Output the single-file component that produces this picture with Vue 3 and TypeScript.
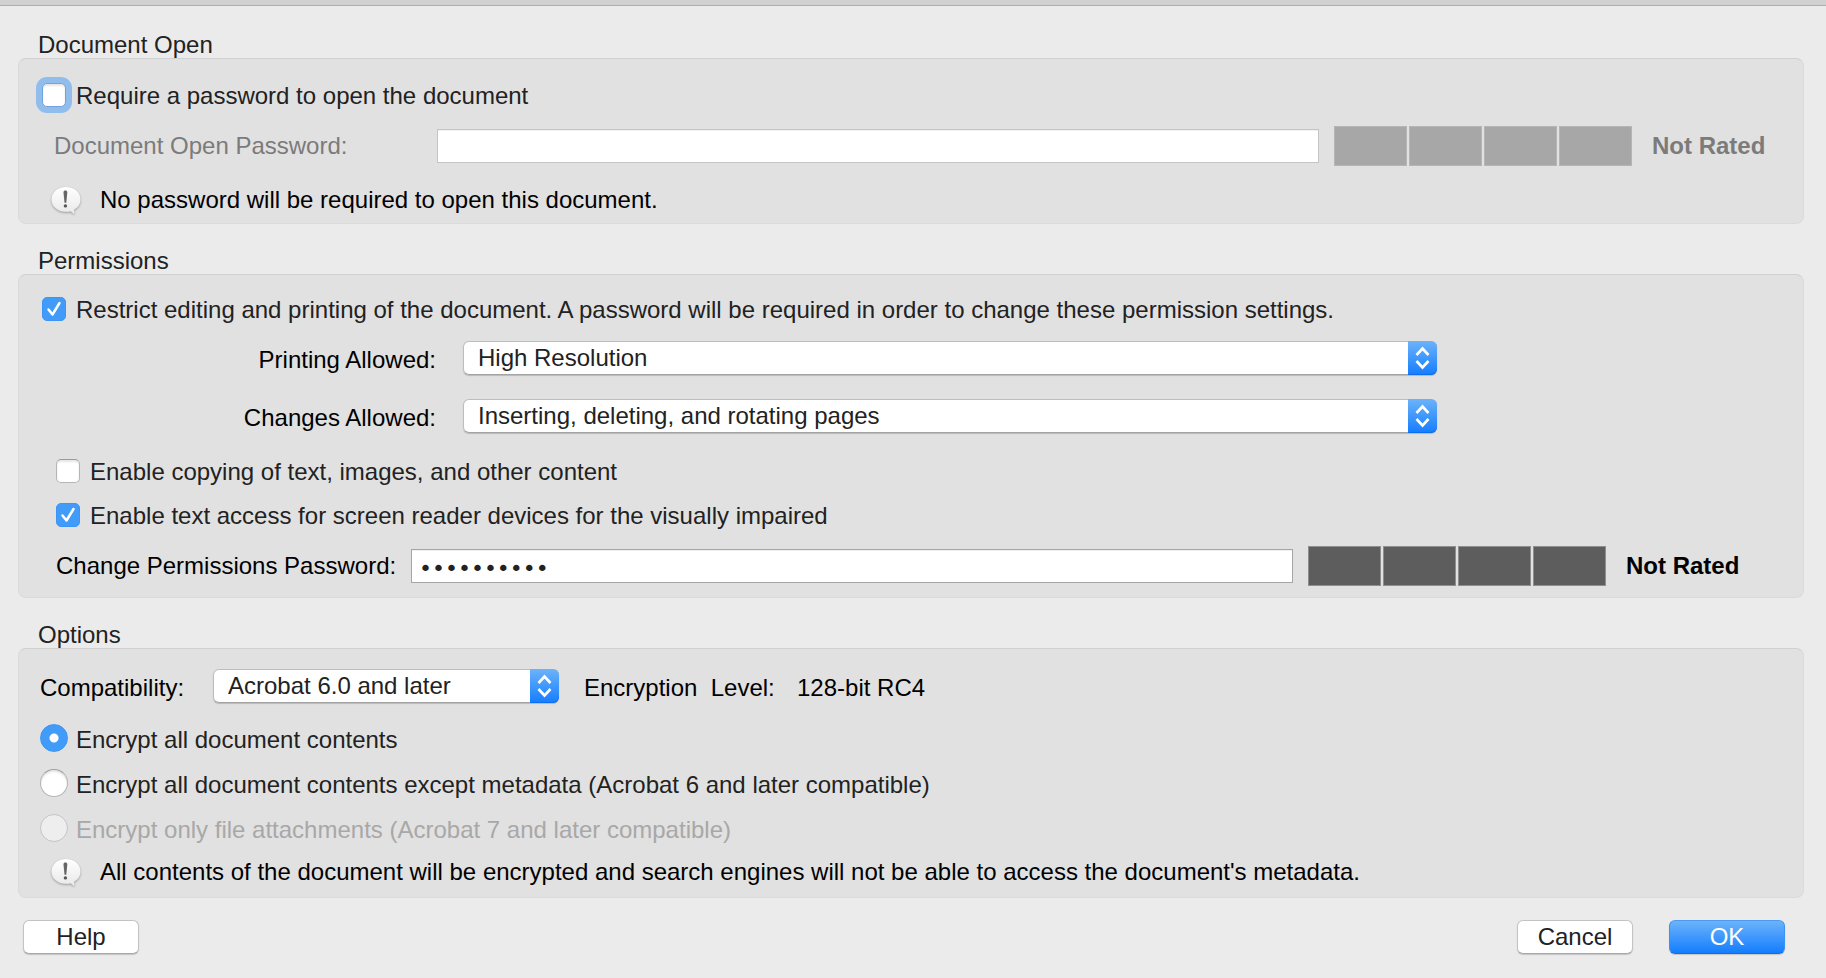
<script setup lang="ts">
import { ref } from 'vue'

const requireOpen = ref(false)
const openPassword = ref('')
const restrict = ref(true)
const printing = ref('High Resolution')
const changes = ref('Inserting, deleting, and rotating pages')
const copying = ref(false)
const screenReader = ref(true)
const permPassword = ref('permission')
const compatibility = ref('Acrobat 6.0 and later')
const encryption = ref('all')

const printingOptions = ['None', 'Low Resolution (150 dpi)', 'High Resolution']
const changesOptions = ['None', 'Inserting, deleting, and rotating pages', 'Any except extracting pages']
const compatibilityOptions = ['Acrobat 5.0 and later', 'Acrobat 6.0 and later', 'Acrobat 7.0 and later']

const encryptionOptions = [
  { id: 'all', label: 'Encrypt all document contents', disabled: false },
  { id: 'except', label: 'Encrypt all document contents except metadata (Acrobat 6 and later compatible)', disabled: false },
  { id: 'files', label: 'Encrypt only file attachments (Acrobat 7 and later compatible)', disabled: true },
]
</script>

<template>
  <form class="dialog" @submit.prevent>
    <section>
      <h2>Document Open</h2>
      <div class="panel panel-open">
        <label class="choice">
          <span class="box">
            <input v-model="requireOpen" type="checkbox" class="ringed" />
            <svg v-if="requireOpen" viewBox="0 0 24 24"><path d="M6.500 12.500l4 5L17.500 6" /></svg>
          </span>
          <span>Require a password to open the document</span>
        </label>
        <div class="password-row password-open">
          <label for="open-password" class="dim">Document Open Password:</label>
          <input id="open-password" v-model="openPassword" type="password" class="field" disabled />
          <span class="meter faded" role="img" aria-label="Password strength"><i v-for="n in 4" :key="n"></i></span>
          <strong class="dim">Not Rated</strong>
        </div>
        <p class="note">
          <svg class="bubble" viewBox="0 0 32 28" aria-hidden="true">
            <defs>
              <linearGradient id="bubble-fill" x1="0" y1="0" x2="0" y2="1">
                <stop offset="0" stop-color="#ffffff" />
                <stop offset="1" stop-color="#e9e9e9" />
              </linearGradient>
            </defs>
            <path class="bubble-shape" fill="url(#bubble-fill)" d="M16 0C7.800 0 1.500 5.400 1.500 12.500S7.500 24.300 15 24.800c2 .1 4.400-.1 5.800-.6.9 1.200 2 2.100 3.400 2.800l-.1-4.400c3.900-2 6.400-5.800 6.400-10.100C30.500 5.400 24.200 0 16 0z" />
            <path fill="#666" d="M13.500 5.600c0-1.400.8-2 1.900-2s1.900.6 1.900 2l-1 10.200h-1.800z" />
            <circle cx="15.400" cy="18.900" r="1.700" fill="#555" />
          </svg>
          <span>No password will be required to open this document.</span>
        </p>
      </div>
    </section>

    <section>
      <h2>Permissions</h2>
      <div class="panel panel-permissions">
        <label class="choice">
          <span class="box">
            <input v-model="restrict" type="checkbox" />
            <svg v-if="restrict" viewBox="0 0 24 24"><path d="M6.500 12.500l4 5L17.500 6" /></svg>
          </span>
          <span>Restrict editing and printing of the document. A password will be required in order to change these permission settings.</span>
        </label>
        <div class="selects">
          <label for="printing">Printing Allowed:</label>
          <span class="popup">
            <select id="printing" v-model="printing">
              <option v-for="o in printingOptions" :key="o">{{ o }}</option>
            </select>
            <svg viewBox="0 0 29 34" aria-hidden="true"><path d="M8.500 14l6-6.500 6 6.500M8.500 20l6 6.500 6-6.500" /></svg>
          </span>
          <label for="changes">Changes Allowed:</label>
          <span class="popup">
            <select id="changes" v-model="changes">
              <option v-for="o in changesOptions" :key="o">{{ o }}</option>
            </select>
            <svg viewBox="0 0 29 34" aria-hidden="true"><path d="M8.500 14l6-6.500 6 6.500M8.500 20l6 6.500 6-6.500" /></svg>
          </span>
        </div>
        <div class="extras">
          <label class="choice">
            <span class="box">
              <input v-model="copying" type="checkbox" />
              <svg v-if="copying" viewBox="0 0 24 24"><path d="M6.500 12.500l4 5L17.500 6" /></svg>
            </span>
            <span>Enable copying of text, images, and other content</span>
          </label>
          <label class="choice">
            <span class="box">
              <input v-model="screenReader" type="checkbox" />
              <svg v-if="screenReader" viewBox="0 0 24 24"><path d="M6.500 12.500l4 5L17.500 6" /></svg>
            </span>
            <span>Enable text access for screen reader devices for the visually impaired</span>
          </label>
        </div>
        <div class="password-row password-permissions">
          <label for="perm-password">Change Permissions Password:</label>
          <input id="perm-password" v-model="permPassword" type="password" class="field" />
          <span class="meter" role="img" aria-label="Password strength"><i v-for="n in 4" :key="n"></i></span>
          <strong>Not Rated</strong>
        </div>
      </div>
    </section>

    <section>
      <h2>Options</h2>
      <div class="panel panel-options">
        <div class="compat">
          <label for="compatibility">Compatibility:</label>
          <span class="popup">
            <select id="compatibility" v-model="compatibility">
              <option v-for="o in compatibilityOptions" :key="o">{{ o }}</option>
            </select>
            <svg viewBox="0 0 29 34" aria-hidden="true"><path d="M8.500 14l6-6.500 6 6.500M8.500 20l6 6.500 6-6.500" /></svg>
          </span>
          <span class="level">Encryption&nbsp; Level:</span>
          <span class="cipher">128-bit RC4</span>
        </div>
        <div class="radios">
          <label v-for="o in encryptionOptions" :key="o.id" class="radio" :class="{ off: o.disabled }">
            <input v-model="encryption" type="radio" name="encryption" :value="o.id" :disabled="o.disabled" />
            <span>{{ o.label }}</span>
          </label>
        </div>
        <p class="note">
          <svg class="bubble" viewBox="0 0 32 28" aria-hidden="true">
            <path class="bubble-shape" fill="url(#bubble-fill)" d="M16 0C7.800 0 1.500 5.400 1.500 12.500S7.500 24.300 15 24.800c2 .1 4.400-.1 5.800-.6.9 1.200 2 2.100 3.400 2.800l-.1-4.400c3.900-2 6.400-5.800 6.400-10.100C30.500 5.400 24.200 0 16 0z" />
            <path fill="#666" d="M13.500 5.600c0-1.400.8-2 1.900-2s1.900.6 1.900 2l-1 10.200h-1.800z" />
            <circle cx="15.400" cy="18.900" r="1.700" fill="#555" />
          </svg>
          <span>All contents of the document will be encrypted and search engines will not be able to access the document's metadata.</span>
        </p>
      </div>
    </section>

    <footer>
      <button type="button">Help</button>
      <span class="spacer"></span>
      <button type="button">Cancel</button>
      <button type="submit" class="primary">OK</button>
    </footer>
  </form>
</template>

<style>
body {
  margin: 0;
  background: #ebebeb;
}
</style>

<style scoped>
.dialog {
  box-sizing: border-box;
  min-height: 100vh;
  padding: 0 22px 0 18px;
  border-top: 5px solid #d1d1d1;
  box-shadow: inset 0 1px #b1adb0;
  background: #ebebeb;
  color: #222;
  font: 24px/26px "Liberation Sans", Arial, sans-serif;
}
section {
  padding-top: 23px;
}
section:first-child {
  padding-top: 26px;
}
h2 {
  margin: 0 0 0 20px;
  font-size: 24px;
  line-height: 27px;
  font-weight: 400;
}
.panel {
  border: 1px solid #dadada;
  border-top-color: #d0d0d0;
  border-radius: 8px;
  background: #e1e1e1;
}
.panel-open {
  padding: 24px 38px 8px 23px;
}
.panel-permissions {
  padding: 22px 64px 10px 23px;
}
.panel-options {
  padding: 20px 23px 10px 21px;
}

.choice,
.radio {
  display: flex;
  align-items: flex-start;
  gap: 10px;
  width: fit-content;
}
.box,
.popup {
  display: grid;
}
.box {
  width: 24px;
  height: 24px;
  flex: none;
}
.box > * {
  grid-area: 1 / 1;
}
.box input,
.radio input {
  appearance: none;
  box-sizing: border-box;
  width: 24px;
  height: 24px;
  margin: 0;
  border: 1px solid #b5b5b5;
  border-top-color: #9c9c9c;
  border-radius: 5px;
  background: #fff;
  box-shadow: inset 0 2px 2px #e6e6e6;
}
.box input:checked,
.radio input:checked {
  border-color: #3b94f6;
  background: #419bf9;
  box-shadow: none;
}
.box input.ringed {
  border-color: #6fa3dc;
  box-shadow: 0 0 0 6px #91bdec, inset 0 2px 2px #e6e6e6;
}
.box svg {
  width: 24px;
  height: 24px;
  pointer-events: none;
}
.box path {
  fill: none;
  stroke: #fff;
  stroke-width: 2.5;
  stroke-linecap: round;
  stroke-linejoin: round;
}

.password-row {
  display: flex;
  align-items: center;
  height: 42px;
  color: #000;
}
.password-open {
  margin: 16px 0 20px 12px;
}
.password-open label {
  width: 383px;
}
.password-permissions {
  margin: 16px 0 0 14px;
}
.password-permissions label {
  width: 355px;
}
.password-row .dim {
  color: #7b7b7b;
}
.field {
  box-sizing: border-box;
  flex: 1;
  min-width: 0;
  height: 34px;
  padding: 4px 7px 0;
  border: 1px solid #a6a6a6;
  border-radius: 0;
  outline: 0;
  background: #fff;
  box-shadow: inset 0 1px #f0f0f0;
  color: #222;
  font: 22px/28px "DejaVu Sans", sans-serif;
}
.field:disabled {
  border-color: #c5c5c5;
}
.meter {
  display: flex;
  gap: 2px;
  width: 298px;
  height: 40px;
  margin: 0 20px 0 15px;
}
.meter i {
  box-sizing: border-box;
  flex: 1;
  border: 1px solid #8e8e8e;
  background: #5d5d5d;
}
.meter.faded i {
  border-color: #b5b5b5;
  background: #a7a7a7;
}
strong {
  width: 113px;
  white-space: nowrap;
}

.note {
  display: flex;
  align-items: flex-start;
  gap: 18px;
  margin: 0 0 0 8px;
  color: #000;
}
.panel-options .note {
  margin: 16px 0 0 10px;
}
.bubble {
  width: 32px;
  height: 28px;
  flex: none;
  overflow: visible;
}
.bubble-shape {
  filter: drop-shadow(0 1px 1px #999);
}

.selects {
  display: grid;
  grid-template-columns: 394px minmax(0, 974px);
  column-gap: 27px;
  row-gap: 24px;
  margin-top: 18px;
  color: #000;
}
.selects label {
  height: 28px;
  padding-top: 6px;
  text-align: right;
}
.popup {
  height: 34px;
  grid-template-columns: 1fr 29px;
  border-radius: 6px;
  box-shadow: 0 1px 1px #b8b8b8;
}
.popup select {
  appearance: none;
  grid-area: 1 / 1 / 2 / 3;
  box-sizing: border-box;
  width: 100%;
  height: 34px;
  margin: 0;
  padding: 0 40px 0 14px;
  border: 1px solid #bdbdbd;
  border-bottom-color: #a3a3a3;
  border-radius: 6px;
  background: #fff;
  color: #222;
  font: inherit;
}
.popup svg {
  grid-area: 1 / 2;
  width: 29px;
  height: 34px;
  z-index: 1;
  border-radius: 0 6px 6px 0;
  background: linear-gradient(#6cb3fa, #147dfe);
  box-shadow: inset 0 -1px #0f6ef0;
  pointer-events: none;
}
.popup path {
  fill: none;
  stroke: #fff;
  stroke-width: 2.6;
}
.extras {
  display: grid;
  gap: 18px;
  margin: 26px 0 0 14px;
}

.compat {
  display: flex;
  align-items: flex-start;
  color: #000;
}
.compat label {
  width: 173px;
  padding-top: 6px;
}
.compat .popup {
  width: 346px;
}
.level,
.cipher {
  padding-top: 6px;
  white-space: nowrap;
}
.level {
  width: 213px;
  margin-left: 25px;
}
.radios {
  display: grid;
  gap: 16px;
  margin-top: 21px;
}
.radio {
  gap: 8px;
}
.radio span {
  padding-top: 3px;
}
.radio input {
  width: 28px;
  height: 28px;
  flex: none;
  border-radius: 50%;
}
.radio input:checked {
  background: radial-gradient(circle, #fff 4px, #419bf9 5px);
}
.radio input:disabled {
  border-color: #c4c4c4;
  background: #eee;
  box-shadow: none;
}
.off {
  color: #a8a8a8;
}

footer {
  display: flex;
  padding: 22px 19px 0 5px;
}
.spacer {
  flex: 1;
}
button {
  box-sizing: border-box;
  width: 116px;
  height: 34px;
  padding: 0;
  border: 1px solid #c3c3c3;
  border-bottom-color: #a8a8a8;
  border-radius: 6px;
  background: #fff;
  box-shadow: 0 1px 1px #c4c4c4;
  color: #222;
  font: inherit;
}
.primary {
  margin-left: 36px;
  border-color: #4a9bf3 #3b90f5 #0f6ef0;
  background: linear-gradient(#6cb3fa, #147dfe);
  color: #fff;
}
</style>
